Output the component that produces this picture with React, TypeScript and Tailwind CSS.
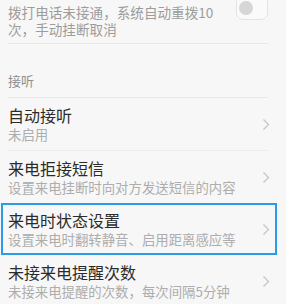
import React from "react";

const Chevron = () => (
  <svg width="8" height="13" viewBox="0 0 8 13" className="shrink-0">
    <path d="M1.5 1.5 L6.5 6.5 L1.5 11.5" fill="none" stroke="#c4c4c4" strokeWidth="1.2" />
  </svg>
);

type RowProps = { title: string; sub: string; focused?: boolean };

const Row = ({ title, sub, focused }: RowProps) => (
  <div
    className={
      "flex items-center h-[52px] pl-[5px] pr-[5px] border-2 " +
      (focused ? "border-[#2a9be6]" : "border-transparent")
    }
  >
    <div className="flex-1 flex flex-col">
      <div className="text-[16px] leading-[20px] text-[#2b2b2b]">{title}</div>
      <div className="text-[13.4px] leading-[19px] text-[#adadad]">{sub}</div>
    </div>
    <Chevron />
  </div>
);

export default function App() {
  return (
    <div
      className="w-[286px] h-[304px] overflow-hidden bg-[#f7f7f7]"
      style={{ fontFamily: '"Noto Sans CJK SC", "Noto Sans", sans-serif' }}
    >
      <div className="flex items-start pl-[8px] pr-[18px] pt-[4px] pb-[5px]">
        <div className="flex-1 text-[13.6px] leading-[17px] text-[#9c9c9c]">
          拨打电话未接通，系统自动重拨10
          <br />
          次，手动挂断取消
        </div>
        <div className="-mt-[10px] w-[32px] h-[26px] rounded-[7px] border border-[#e4e4e4] bg-[#fafafa] flex items-center pl-[2px]">
          <div className="w-[14px] h-[14px] mt-[2px] rounded-full bg-[#d6d6d6]" />
        </div>
      </div>
      <div className="mx-[8px] w-[260px] h-px bg-[#e8e8e8]" />
      <div className="pl-[8px] pt-[28px] pb-[8px] text-[13px] leading-[17px] text-[#8e8e8e]">接听</div>
      <div className="mx-[8px] w-[260px] h-px bg-[#e8e8e8]" />
      <div className="ml-[1px] w-[276px] flex flex-col">
        <Row title="自动接听" sub="未启用" />
        <div className="mx-[7px] w-[260px] h-px bg-[#ececec]" />
        <Row title="来电拒接短信" sub="设置来电挂断时向对方发送短信的内容" />
        <Row title="来电时状态设置" sub="设置来电时翻转静音、启用距离感应等" focused />
        <Row title="未接来电提醒次数" sub="未接来电提醒的次数，每次间隔5分钟" />
      </div>
    </div>
  );
}
